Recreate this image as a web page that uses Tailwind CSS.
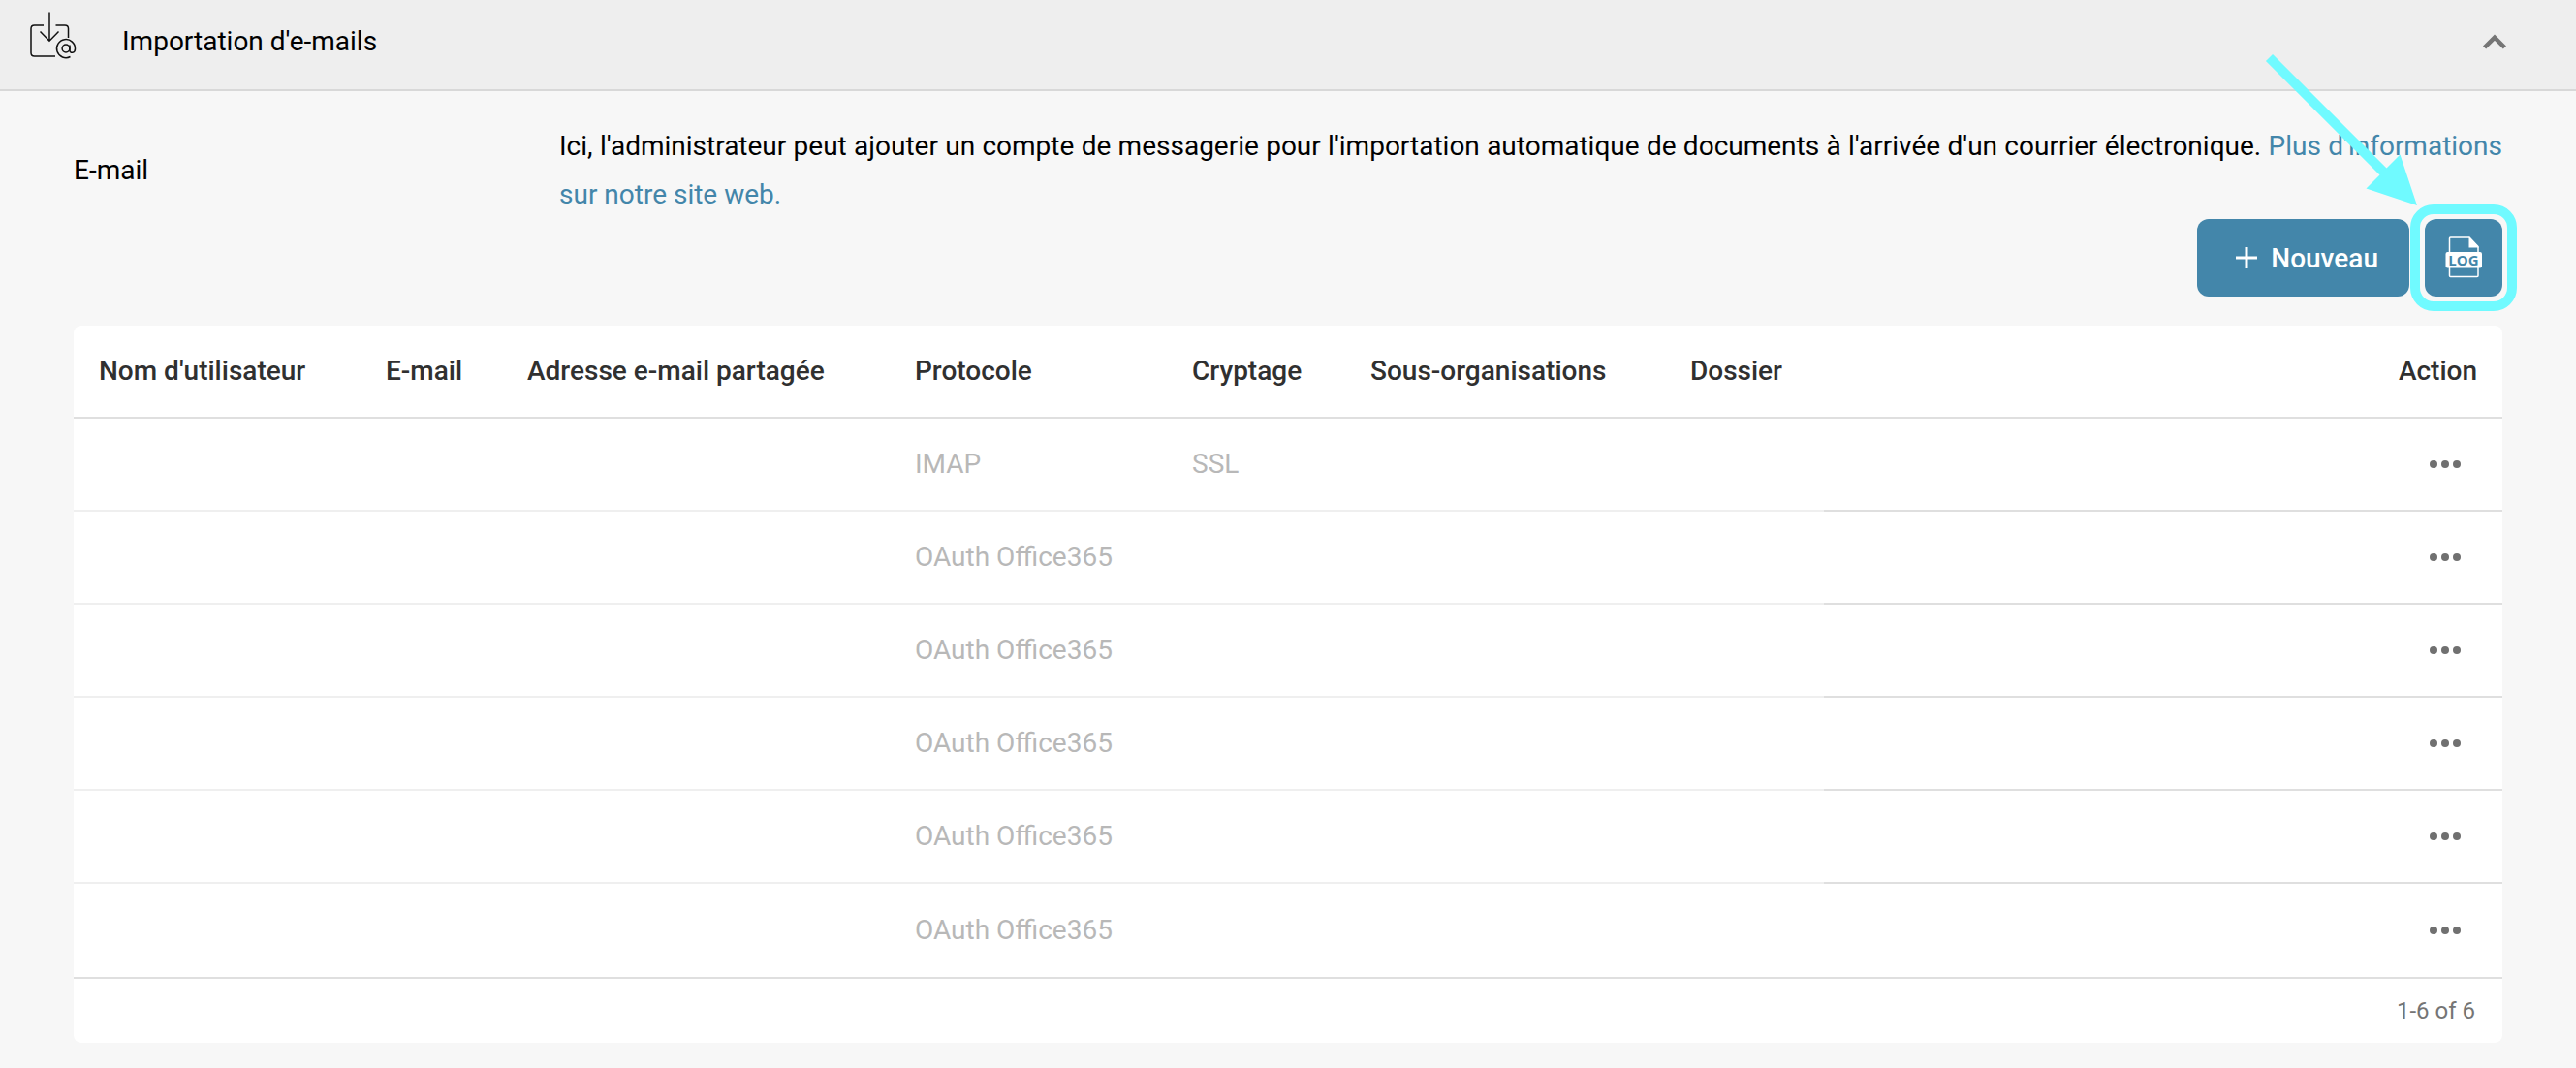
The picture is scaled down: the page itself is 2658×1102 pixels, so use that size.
<!DOCTYPE html>
<html lang="fr">
<head>
<meta charset="utf-8">
<meta name="viewport" content="width=device-width, initial-scale=1">
<title>Importation d'e-mails</title>
<script src="https://cdn.jsdelivr.net/npm/@tailwindcss/browser@4"></script>
</head>
<body class="min-h-screen bg-[#f7f7f7] font-[Roboto,sans-serif] text-[28px] leading-8 text-black">
<header class="flex h-[94px] items-start border-b-2 border-[#d8d8d8] bg-[#eeeeee] pr-[72px] pl-[30px]">
  <svg class="mt-3 h-[50px] w-[50px] shrink-0" viewBox="0 0 50 50" fill="none" stroke="#111" stroke-width="1.5" aria-hidden="true">
    <path d="M15 14H5.500Q2 14 2 17.500V42.500Q2 46 5.500 46H27M27.500 14H37Q40.500 14 40.500 17.500V27"/>
    <path d="M21 .5V30M11.500 20.500L21 30.200L30.500 20.500"/>
    <path d="M42.500 46.500A9.500 9.500 0 1 1 47.500 38.500C47.500 43 42 43.500 42 40V34.500"/>
    <circle cx="38" cy="38" r="3.900"/>
  </svg>
  <h1 class="mt-[27px] ml-[46px] grow">Importation d'e-mails</h1>
  <button type="button" class="mt-8 flex h-6 w-6 items-center justify-center" aria-label="Réduire">
    <svg class="h-6 w-6" viewBox="0 0 24 24" fill="none" stroke="#757575" stroke-width="4.500"><path d="M1.600 17L12 6.600L22.400 17"/></svg>
  </button>
</header>
<main class="px-[76px] pt-8 pb-6">
  <section class="flex">
    <h2 class="mt-[34px] w-[501px] shrink-0">E-mail</h2>
    <p class="grow text-justify leading-[50px]">Ici, l'administrateur peut ajouter un compte de messagerie pour l'importation automatique de documents à l'arrivée d'un courrier électronique. <a href="#" class="text-[#4386aa]">Plus d'informations sur notre site web.</a></p>
  </section>
  <div class="flex justify-end gap-4">
    <button type="button" class="flex h-20 items-center gap-3 rounded-xl bg-[#4386aa] pt-0.5 pr-8 pl-[38px] font-medium text-white">
      <svg class="h-[26px] w-[26px]" viewBox="0 0 26 26" fill="none" stroke="currentColor" stroke-width="3" aria-hidden="true"><path d="M13 1V23M2 12H24"/></svg>
      Nouveau
    </button>
    <div class="relative">
      <button type="button" class="flex h-20 w-20 items-center justify-center rounded-xl bg-[#4386aa]" aria-label="Journal">
        <svg class="h-11 w-10" viewBox="0 0 40 44" aria-hidden="true">
          <path d="M5.500 16V2Q5.500 1 6.500 1H26L35 10.500V16M5.500 31V40.500Q5.500 41.500 6.500 41.500H34Q35 41.500 35 40.500V31" fill="none" stroke="#fff" stroke-width="1.500"/>
          <path d="M25.500 .5L36 11.500H25.500Z" fill="#fff"/>
          <rect x="1.500" y="16" width="37.500" height="16.500" rx="2" fill="#fff"/>
          <text x="20" y="29.500" text-anchor="middle" class="fill-[#4386aa] font-['Open_Sans',sans-serif] text-[15px] font-bold">LOG</text>
        </svg>
      </button>
      <div class="pointer-events-none absolute -inset-[15px] rounded-3xl border-[10px] border-[#70faff]"></div>
      <svg class="pointer-events-none absolute right-[88px] bottom-[94px] h-[160px] w-[160px]" viewBox="0 0 160 160" aria-hidden="true">
        <path d="M7.500 7.500L126 126" stroke="#70faff" stroke-width="10"/>
        <path d="M160 160L142.500 107.500L107.500 142.500Z" fill="#70faff"/>
      </svg>
    </div>
  </div>
  <div class="mt-[30px] overflow-hidden rounded-lg bg-white">
    <table class="w-full table-fixed border-separate border-spacing-0 text-left text-[#b8b8b8]">
      <colgroup><col class="w-[296px]"><col class="w-[146px]"><col class="w-[400px]"><col class="w-[286px]"><col class="w-[184px]"><col class="w-[330px]"><col class="w-[164px]"><col></colgroup>
      <thead class="text-[#303030] [&_th]:h-24 [&_th]:border-b-2 [&_th]:border-[#dfdfdf] [&_th]:px-[26px] [&_th]:font-medium [&_th]:whitespace-nowrap">
        <tr><th scope="col">Nom d'utilisateur</th><th scope="col">E-mail</th><th scope="col">Adresse e-mail partagée</th><th scope="col">Protocole</th><th scope="col">Cryptage</th><th scope="col">Sous-organisations</th><th scope="col">Dossier</th><th scope="col" class="text-right">Action</th></tr>
      </thead>
      <tbody id="rows" class="[&_td]:h-24 [&_td]:border-b-2 [&_td]:border-[#efefef] [&_td]:px-[26px] [&_td:last-child]:border-[#dfdfdf] [&_tr:last-child_td]:border-b-0"></tbody>
    </table>
    <div class="flex h-17 items-center justify-end border-t-2 border-[#dfdfdf] pr-7 text-2xl text-[#757575]">1-6 of 6</div>
  </div>
</main>
<script>
const accounts = [['IMAP', 'SSL'], ...Array(5).fill(['OAuth Office365', ''])];
document.getElementById('rows').innerHTML = accounts.map(([protocol, encryption]) => `
  <tr><td></td><td></td><td></td><td>${protocol}</td><td>${encryption}</td><td></td><td></td>
  <td><button type="button" aria-label="Actions" class="mr-4 ml-auto flex h-8 w-[34px] items-center justify-center gap-1 text-[#707070]">
    <span class="h-2 w-2 shrink-0 rounded-full bg-current"></span><span class="h-2 w-2 shrink-0 rounded-full bg-current"></span><span class="h-2 w-2 shrink-0 rounded-full bg-current"></span>
  </button></td></tr>`).join('');
</script>
</body>
</html>
